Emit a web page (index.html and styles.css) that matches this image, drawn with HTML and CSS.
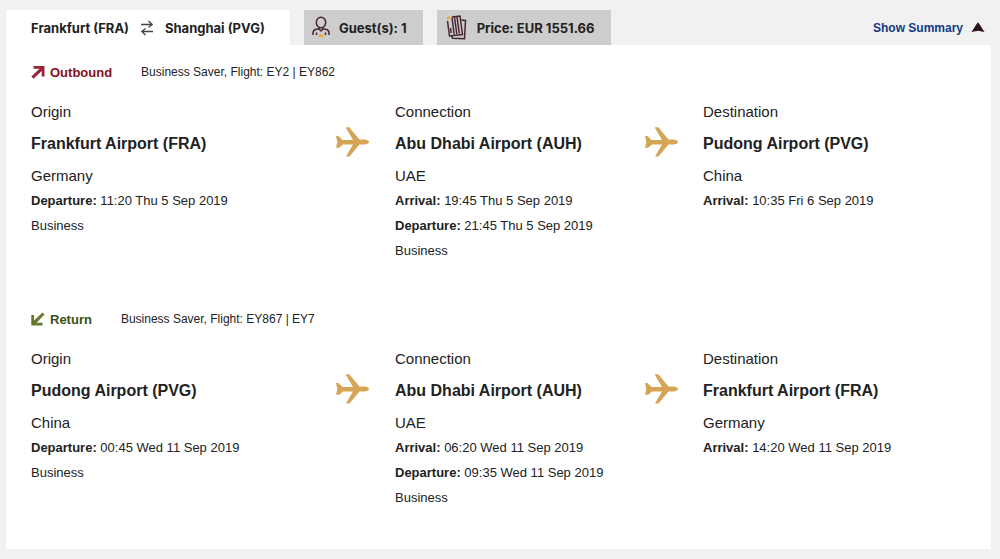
FILE: index.html
```html
<!DOCTYPE html>
<html lang="en">
<head>
    <meta charset="UTF-8">
    <meta name="viewport" content="width=device-width, initial-scale=1.0">
    <title>Your Flights</title>
    <link rel="stylesheet" href="styles.css">
</head>
<body>
    <svg class="defs" width="0" height="0" aria-hidden="true">
        <symbol id="plane" viewBox="0 0 34 30">
            <path d="M0 9h2.500l4 4h10.500L10 1q-.3-.8.500-.8h2.700L23.500 12.600H29q3.800.6 4 2.400-.2 1.800-4 2.400h-5.500L13.500 29.600h-2.700q-.7-.2-.4-.9L17 17.400H7l-3.800 3.300H0l1.300-5.700z"/>
        </symbol>
    </svg>

    <header class="tabs">
        <div class="tab active">
            <span>Frankfurt (FRA)</span>
            <svg class="swap" width="14" height="16" viewBox="0 0 14 16">
                <path d="M1 4.500h11M8.500 1l3.700 3.500L8.500 7.500M13 11.500H2M5.500 8.500L1.800 11.500 5.500 15"/>
            </svg>
            <span>Shanghai (PVG)</span>
        </div>
        <div class="tab guests">
            <svg class="outline" width="18" height="24" viewBox="0 0 18 24">
                <ellipse cx="9" cy="6.500" rx="4.700" ry="5.200"/>
                <path d="M7.300 11.500v1.700L9 15l1.700-1.800v-1.700M1 19v-2.200q.3-3.300 3.500-3.500l2.800-.6M17 19v-2.200q-.3-3.300-3.500-3.500l-2.800-.6M4.500 16.500V19M13.500 16.500V19"/>
                <path class="accent" d="M6.300 21q.3-2.700 2.700-2.700t2.700 2.700z"/>
            </svg>
            <span>Guest(s): 1</span>
        </div>
        <div class="tab price">
            <svg class="outline" width="21" height="25" viewBox="0 0 21 25">
                <path d="M15.500 5l4 .5-1 18.300-12-.6-1-2.500"/>
                <path d="M1.500 6l2 15 13-1.500L14 1 6 2"/>
                <path d="M6 2.500l2.200 17M8.500 2l2.300 17M11 2l2.300 16.500M4.500 13l.7 5"/>
                <path class="accent" d="M.5 3.500q1-2.500 4-2.500l-.3 2.500-3 1.500z"/>
            </svg>
            <span>Price: EUR 1551.66</span>
        </div>
        <a class="summary" href="#flights">
            <span>Show Summary</span>
            <svg width="14" height="11" viewBox="0 0 14 11">
                <path d="M7 .3l1.200 1.400L13.500 10 7 8.800.5 10l5.300-8.300z"/>
            </svg>
        </a>
    </header>

    <main class="flights" id="flights">
        <section class="flight">
            <div class="flight-head">
                <svg width="14" height="14" viewBox="0 0 14 14" class="arrow-out">
                    <path d="M2.500 1H13.500v10.500h-2.800V6L2.500 13.800.3 11.600 8.500 3.800h-6z"/>
                </svg>
                <h2 class="outbound">Outbound</h2>
                <p>Business Saver, Flight: EY2 | EY862</p>
            </div>
            <div class="route">
                <div class="stop">
                    <p class="label">Origin</p>
                    <h3>Frankfurt Airport (FRA)</h3>
                    <p class="country">Germany</p>
                    <p><b>Departure:</b> 11:20 Thu 5 Sep 2019</p>
                    <p>Business</p>
                </div>
                <svg class="plane" width="34" height="30"><use href="#plane"/></svg>
                <div class="stop">
                    <p class="label">Connection</p>
                    <h3>Abu Dhabi Airport (AUH)</h3>
                    <p class="country">UAE</p>
                    <p><b>Arrival:</b> 19:45 Thu 5 Sep 2019</p>
                    <p><b>Departure:</b> 21:45 Thu 5 Sep 2019</p>
                    <p>Business</p>
                </div>
                <svg class="plane" width="34" height="30"><use href="#plane"/></svg>
                <div class="stop">
                    <p class="label">Destination</p>
                    <h3>Pudong Airport (PVG)</h3>
                    <p class="country">China</p>
                    <p><b>Arrival:</b> 10:35 Fri 6 Sep 2019</p>
                </div>
            </div>
        </section>

        <section class="flight">
            <div class="flight-head">
                <svg width="14" height="14" viewBox="0 0 14 14" class="arrow-back">
                    <path d="M.3 3h2.800v5.500L11.500.5l2 2L5.500 10.700h6v2.800H.3z"/>
                </svg>
                <h2 class="return">Return</h2>
                <p>Business Saver, Flight: EY867 | EY7</p>
            </div>
            <div class="route">
                <div class="stop">
                    <p class="label">Origin</p>
                    <h3>Pudong Airport (PVG)</h3>
                    <p class="country">China</p>
                    <p><b>Departure:</b> 00:45 Wed 11 Sep 2019</p>
                    <p>Business</p>
                </div>
                <svg class="plane" width="34" height="30"><use href="#plane"/></svg>
                <div class="stop">
                    <p class="label">Connection</p>
                    <h3>Abu Dhabi Airport (AUH)</h3>
                    <p class="country">UAE</p>
                    <p><b>Arrival:</b> 06:20 Wed 11 Sep 2019</p>
                    <p><b>Departure:</b> 09:35 Wed 11 Sep 2019</p>
                    <p>Business</p>
                </div>
                <svg class="plane" width="34" height="30"><use href="#plane"/></svg>
                <div class="stop">
                    <p class="label">Destination</p>
                    <h3>Frankfurt Airport (FRA)</h3>
                    <p class="country">Germany</p>
                    <p><b>Arrival:</b> 14:20 Wed 11 Sep 2019</p>
                </div>
            </div>
        </section>
    </main>
</body>
</html>
```
FILE: styles.css
```css
* {
    box-sizing: border-box;
}
body {
    font-family: "Liberation Sans", Arial, sans-serif;
    font-size: 13px;
    background-color: #f1f1f1;
    color: #222;
    margin: 0;
    padding: 10px 9px 10px 6px;
}
h2, h3, p {
    margin: 0;
}
.defs {
    display: block;
}
.tabs {
    display: flex;
    align-items: stretch;
}
.tab {
    display: flex;
    align-items: center;
    height: 35px;
    background-color: #cdcdcd;
    font-family: Inter, sans-serif;
    font-size: 13px;
    font-weight: 700;
}
.tab.active {
    gap: 11px;
    padding: 0 25px;
    margin-right: 14px;
    background-color: #fff;
}
.guests {
    gap: 9px;
    padding: 0 16px 0 8px;
    margin-right: 14px;
}
.price {
    gap: 10px;
    padding: 0 16px 0 9px;
}
.swap {
    fill: none;
    stroke: #444;
    stroke-width: 1.3;
}
.outline {
    fill: none;
    stroke: #472531;
    stroke-width: 1.5;
}
.outline .accent {
    fill: #f0a830;
    stroke: none;
}
.summary {
    display: flex;
    align-items: center;
    gap: 8px;
    margin-left: auto;
    padding-right: 6px;
    color: #103a85;
    font-size: 12px;
    font-weight: bold;
    text-decoration: none;
}
.summary svg {
    fill: #30101c;
}
.flights {
    display: flex;
    flex-direction: column;
    gap: 44px;
    padding: 15px 24px 39px 25px;
    background-color: #fff;
}
.flight-head {
    display: flex;
    align-items: center;
    height: 24px;
    margin-bottom: 13px;
}
.flight-head h2 {
    margin: 0 29px 0 5px;
    font-size: 13px;
}
.flight-head p {
    font-size: 12px;
}
.outbound {
    color: #85101c;
}
.return {
    color: #3a5016;
}
.arrow-out {
    fill: #962638;
}
.arrow-back {
    fill: #66782c;
}
.route {
    display: grid;
    grid-template-columns: 305fr 59px 250fr 58px 264fr;
}
.stop p {
    line-height: 25px;
}
.stop .label {
    font-size: 15px;
    line-height: 30px;
}
.stop h3 {
    margin-bottom: 2px;
    font-size: 16px;
    line-height: 34px;
}
.stop .country {
    font-size: 15px;
}
.plane {
    margin-top: 30px;
    fill: #d5a555;
}
```
